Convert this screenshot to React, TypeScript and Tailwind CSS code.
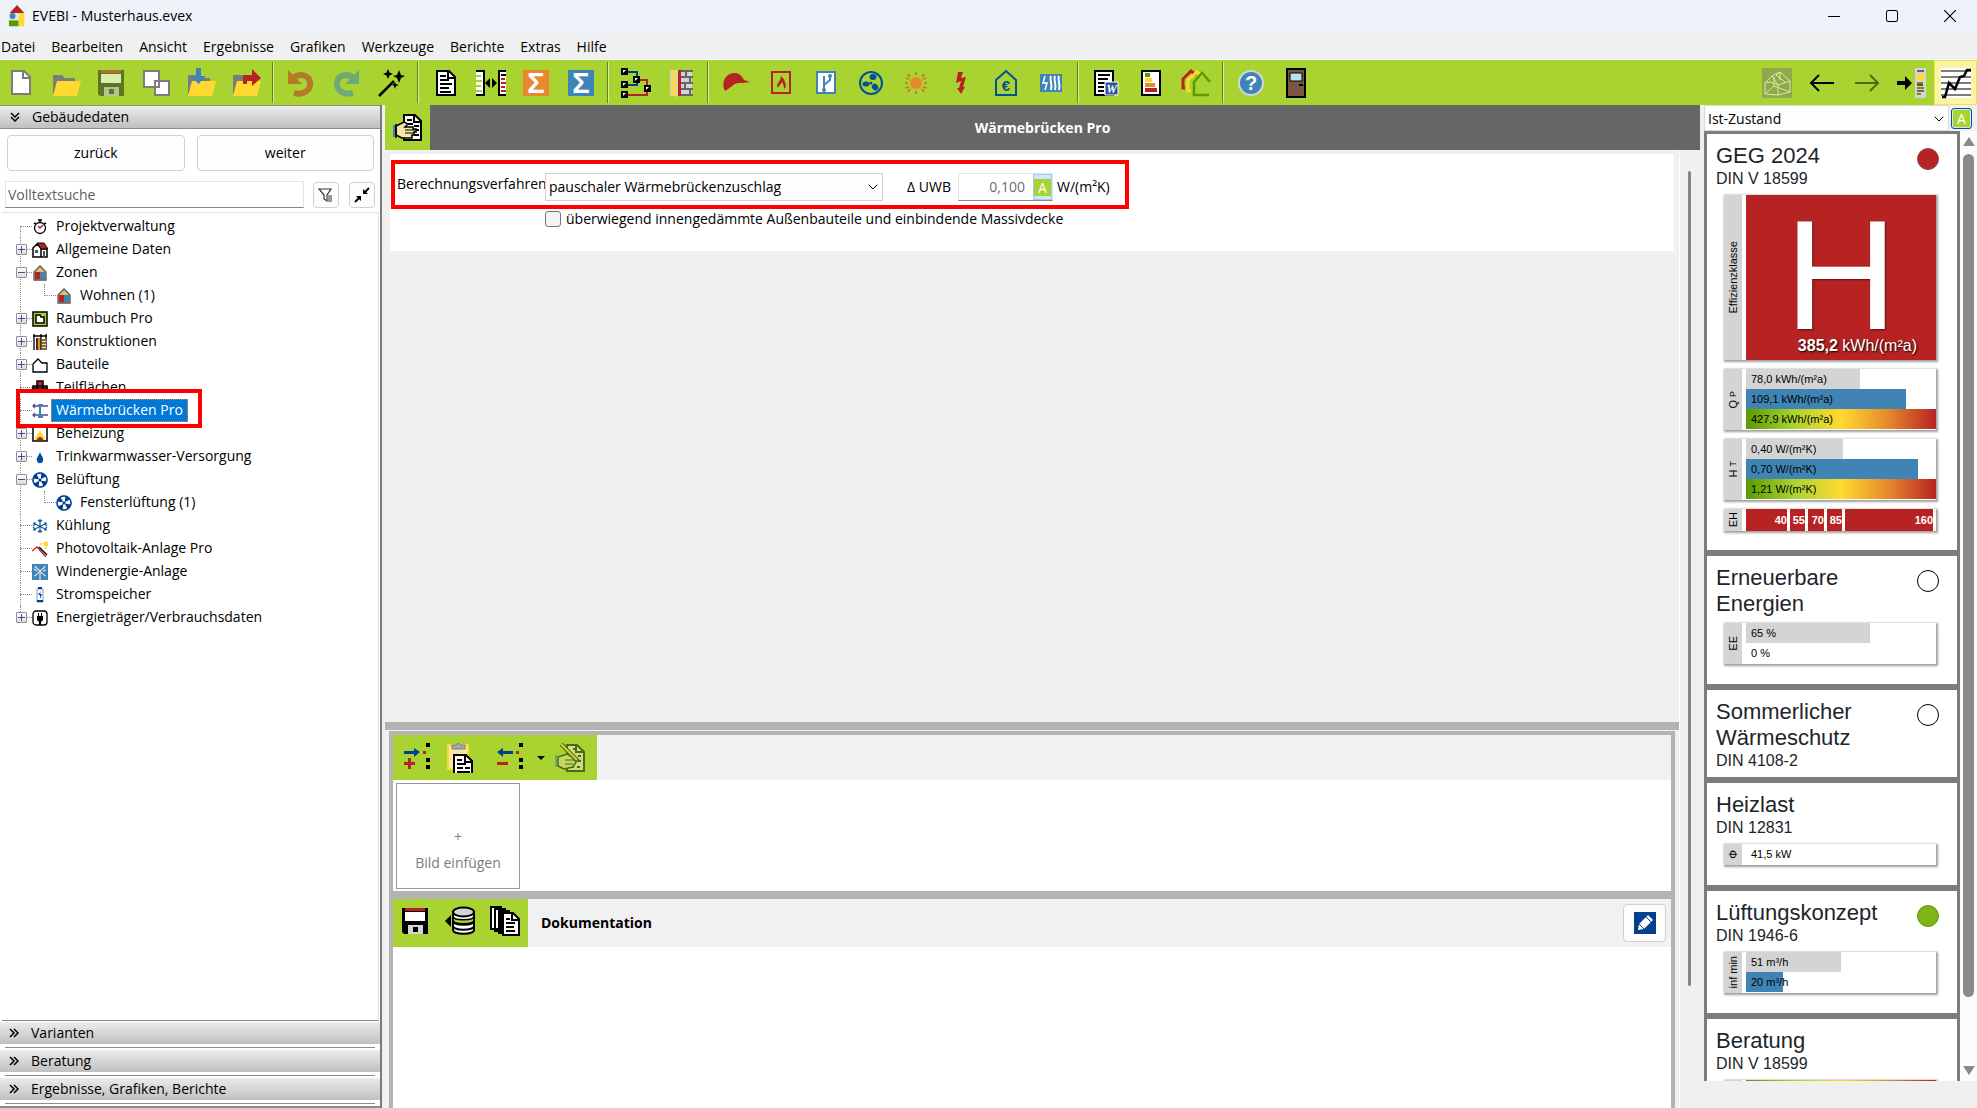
import type { ReactNode } from "react";
import { ChevronDown } from "lucide-react";

const Svg = ({ children, size = "w-[30px] h-[30px]" }: { children: ReactNode; size?: string }) => (
  <svg viewBox="0 0 30 30" className={`${size} shrink-0 overflow-visible`} fill="none" aria-hidden="true">
    {children}
  </svg>
);

const Folder = () => (
  <>
    <path d="M2 7h9l3 3h10v16H2z" fill="#7c7c7c" />
    <path d="M6 13h24l-4 15H2z" fill="#ffd92f" />
  </>
);

const Sheet = () => (
  <>
    <path d="M6 3h12l6 6v18H6z" fill="#fff" stroke="#000" strokeWidth="2" />
    <path d="M17 3v7h7" stroke="#000" strokeWidth="2" />
    <path d="M9 8h6M9 12h9M9 16h12M9 20h9M9 24h11" stroke="#000" strokeWidth="2" />
  </>
);

const NewFile = () => (
  <Svg>
    <path d="M6 3h12l6 6v17H6z" fill="#fff" stroke="#7c7c7c" strokeWidth="2" />
    <path d="M17 3v7h7" stroke="#7c7c7c" strokeWidth="2" />
  </Svg>
);

const OpenFile = () => (
  <Svg><Folder /></Svg>
);

const Save = () => (
  <Svg>
    <path d="M2 2h26v26H4l-2-2z" fill="#5d7424" />
    <path d="M5 2h20v3H5z" fill="#b5752a" />
    <path d="M5 6h20v9H5z" fill="#d8efb0" />
    <path d="M8 19h15v9H8z" fill="#b5c291" />
    <path d="M13 21h5v5h-5z" fill="#5d7424" />
  </Svg>
);

const Copy = () => (
  <Svg>
    <path d="M3 3h15v16H3zM14 13h14v14H14z" fill="#fff" stroke="#7c7c7c" strokeWidth="2" />
    <path d="M3 3h15v9" stroke="#7c7c7c" strokeWidth="2" />
  </Svg>
);

const ImportFile = () => (
  <Svg>
    <Folder />
    <path d="M10 0h5v8h5l-7.500 8L5 8h5z" fill="#3f84b5" />
  </Svg>
);

const ExportFile = () => (
  <Svg>
    <Folder />
    <path d="M12 16V7h9V1l9 9-9 8v-5h-5v3z" fill="#b72222" />
  </Svg>
);

const Undo = () => (
  <Svg>
    <path d="M8 9c9-5 17 0 16 8-1 7-8 10-16 8" stroke="#b5792a" strokeWidth="6" />
    <path d="M2 2v14h14z" fill="#b5792a" />
  </Svg>
);

const Redo = () => (
  <Svg>
    <path d="M22 9C13 4 5 9 6 17c1 7 8 10 16 8" stroke="#6fa978" strokeWidth="6" />
    <path d="M28 2v14H14z" fill="#6fa978" />
  </Svg>
);

const Wand = () => (
  <Svg>
    <path d="M3 28L18 13" stroke="#000" strokeWidth="2.500" />
    <path d="M12 1l1.500 3.500L17 6l-3.500 1.500L12 11l-1.500-3.500L7 6l3.500-1.500zM23 2l2 5 4 1-4 2-2 5-2-5-4-2 4-1zM19 14l1 2 3 1-3 1-1 3-1-3-2-1 2-1z" fill="#000" />
  </Svg>
);

const Report = () => (
  <Svg><Sheet /></Svg>
);

const Compare = () => (
  <Svg>
    <path d="M0 3h9v24H0z" fill="#fff" />
    <path d="M0 3h8v24H0" stroke="#000" strokeWidth="2" />
    <path d="M0 8h5M0 13h6M0 18h5M0 23h6" stroke="#a9d331" strokeWidth="2" />
    <path d="M22 3h8v24h-8z" fill="#fff" />
    <path d="M30 3h-7v24h7" stroke="#000" strokeWidth="2" />
    <path d="M25 7h5" stroke="#000" strokeWidth="2" />
    <path d="M25 11h4M25 15h5M25 19h4M25 23h5" stroke="#b72222" strokeWidth="2" />
    <path d="M14 10v10l-5-5zM16 10v10l5-5z" fill="#000" />
  </Svg>
);

const Sum = ({ color }: { color: string }) => (
  <Svg>
    <path d="M2 2h26v26H2z" fill={color} />
    <text x="15" y="25" textAnchor="middle" fontSize="29" fontWeight="bold" fontFamily="Liberation Sans, sans-serif" fill="#fff">Σ</text>
  </Svg>
);

const Scheme = () => (
  <Svg>
    <path d="M4 4h12v8M4 17h12v-5" stroke="#023f8e" strokeWidth="2" />
    <path d="M17 12h9v8M4 27h22v-7" stroke="#b72222" strokeWidth="2" />
    {[[0, 0], [0, 13], [0, 23], [12, 8], [23, 17]].map(([x, y]) => (
      <g key={`${x}-${y}`}>
        <rect x={x} y={y} width="7" height="7" fill="#000" />
        <path d={`M${x + 2} ${y + 5}v-3h3z`} fill="#fff" />
      </g>
    ))}
  </Svg>
);

const Wall = () => (
  <Svg>
    <path d="M4 2h9v26H4z" fill="#d4d4d4" />
    <path d="M5 3l6 2-6 3 6 3-6 3 6 3-6 3 6 3-6 3 6 2" stroke="#ffd92f" strokeWidth="2" />
    <path d="M12 2h3v26h-3z" fill="#b72222" />
    <path d="M15 2h11v26H15z" fill="#d4d4d4" />
    <path d="M15 3h12M15 9h12M15 15h12M15 21h12M15 27h12M20 3v6M24 9v6M19 15v6M24 21v6" stroke="#666" strokeWidth="2" />
  </Svg>
);

const Cap = () => (
  <Svg>
    <path d="M3 21C0 10 8 4 15 5c5 1 7 5 8 7l6 2-7 1c-6 0-8 0-12 4l-6 4z" fill="#b72222" />
  </Svg>
);

const Heating = () => (
  <Svg>
    <path d="M6 4h18v21H6z" stroke="#b72222" strokeWidth="2" />
    <path d="M12 20c-3-5 3-6 3-12 4 3 4 7 5 9 0 2-1 3-2 4 0-4-1-5-2-7-1 3-3 3-4 6z" fill="#b72222" />
  </Svg>
);

const Pipe = () => (
  <Svg>
    <path d="M6 4h18v21H6z" fill="#fff" stroke="#3f84b5" strokeWidth="2" />
    <path d="M13 8v14M13 17l6-5V8" stroke="#3f84b5" strokeWidth="2" />
    <circle cx="13" cy="22" r="2" fill="#3f84b5" />
    <circle cx="19" cy="8" r="2" fill="#3f84b5" />
  </Svg>
);

const Ventilation = () => (
  <Svg>
    <circle cx="15" cy="15" r="11" stroke="#01509a" strokeWidth="2" />
    <circle cx="15" cy="15" r="1.500" fill="#01509a" />
    <ellipse cx="17" cy="9" rx="3.500" ry="3" fill="#01509a" />
    <ellipse cx="10" cy="16" rx="3.500" ry="2.500" fill="#01509a" />
    <ellipse cx="19" cy="19" rx="3" ry="3.500" fill="#01509a" transform="rotate(-35 19 19)" />
  </Svg>
);

const Sun = () => (
  <Svg>
    <circle cx="15" cy="15" r="6" fill="#e8892f" />
    <path d="M15 4v3M15 23v3M4 15h3M23 15h3M7 6l2 3M23 6l-2 3M7 24l2-3M23 24l-2-3M5 10l3 1M25 10l-3 1M5 20l3-1M25 20l-3-1" stroke="#d8662a" strokeWidth="1.500" />
  </Svg>
);

const Bolt = () => (
  <Svg>
    <path d="M12 4h5l-2 6 5-1-3 10h2l-4 7-4-6h2l2-7-5 2z" fill="#b72222" />
  </Svg>
);

const Cost = () => (
  <Svg>
    <path d="M5 12L15 3l10 9v15H5z" stroke="#01509a" strokeWidth="2" />
    <text x="15" y="23" textAnchor="middle" fontSize="15" fontWeight="bold" fontFamily="Liberation Sans, sans-serif" fill="#01509a">€</text>
  </Svg>
);

const Electric = () => (
  <Svg>
    <path d="M4 6h22v18H4z" fill="#3f84b5" />
    <path d="M9 8l-2 7h4l-2 7" stroke="#fff" strokeWidth="1.500" />
    <path d="M15 8c-2 4 2 8 0 14M19 8c-2 4 2 8 0 14M23 8c-2 4 2 8 0 14" stroke="#fff" strokeWidth="2" />
  </Svg>
);

const WordReport = () => (
  <Svg>
    <path d="M4 3h18v24H4z" fill="#fff" stroke="#000" strokeWidth="2" />
    <path d="M7 7h12M7 11h10M7 15h12M7 19h6M7 23h6" stroke="#000" strokeWidth="2" />
    <path d="M14 14h13v13H14z" fill="#2a5699" stroke="#fff" />
    <text x="20.500" y="25" textAnchor="middle" fontSize="12" fontStyle="italic" fontWeight="bold" fontFamily="Liberation Serif, serif" fill="#fff">W</text>
  </Svg>
);

const EnergyPass = () => (
  <Svg>
    <path d="M6 3h18v24H6z" fill="#fff" stroke="#000" strokeWidth="2" />
    <path d="M9 5h5v4H9z" fill="#5b9a00" />
    <path d="M9 10h7v4H9z" fill="#ffd92f" />
    <path d="M9 15h10v4H9z" fill="#e8892f" />
    <path d="M9 20h12v4H9z" fill="#b72222" />
  </Svg>
);

const Houses = () => (
  <Svg>
    <path d="M4 20h-2V11l8-8 5 4" stroke="#b72222" strokeWidth="3" />
    <path d="M10 23H7V12l9-8 5 4" stroke="#ffd92f" strokeWidth="3" />
    <path d="M28 27H13V14l8-9 8 9" stroke="#5b9a00" strokeWidth="2.500" />
  </Svg>
);

const Help = () => (
  <Svg>
    <circle cx="15" cy="15" r="12" fill="#3f84b5" stroke="#cfd8dc" strokeWidth="2" />
    <text x="15" y="22" textAnchor="middle" fontSize="20" fontWeight="bold" fontFamily="Liberation Sans, sans-serif" fill="#fff">?</text>
  </Svg>
);

const Door = () => (
  <Svg>
    <path d="M6 1h18v28H6z" fill="#7b5541" stroke="#000" strokeWidth="2" />
    <path d="M9 5h12v8H9z" fill="#b9dcf5" stroke="#000" />
    <path d="M18 17h4" stroke="#000" strokeWidth="2" />
  </Svg>
);

const HouseModel = () => (
  <Svg>
    <path d="M0 0h30v30H0z" fill="#8fa84d" />
    <path d="M3 15l7-7 8-4 10 9v11l-12 3-13-1zM3 15l5-1 8 3 12-4M16 17v10M10 8l6 9M18 4l-4 3 9 7M12 9v9l-9 8M12 18l16 6M18 4v8" stroke="#d9ec9f" />
  </Svg>
);

const ArrowBack = () => (
  <Svg>
    <path d="M27 15H4M12 7l-8 8 8 8" stroke="#000" strokeWidth="2" />
  </Svg>
);

const ArrowForward = () => (
  <Svg>
    <path d="M3 15h23M18 7l8 8-8 8" stroke="#4f6a12" strokeWidth="2" />
  </Svg>
);

const JumpTo = () => (
  <Svg>
    <path d="M0 13h8V8l7 7-7 7v-5H0z" fill="#000" />
    <path d="M18 0h11v30H18z" fill="#d4d4d4" />
    <path d="M20 2h7v2h-7z" fill="#666" />
    <path d="M20 6h7v6h-7z" fill="#ffd92f" />
    <path d="M20 15h6M20 20h7M20 26h4" stroke="#5b9a00" strokeWidth="2" />
    <path d="M20 17h6" stroke="#b72222" strokeWidth="2" />
    <path d="M20 23h7" stroke="#666" strokeWidth="2" />
  </Svg>
);

const Chart = () => (
  <Svg>
    <path d="M0 0h30v30H0z" fill="#fff" />
    <path d="M0 3h30M0 9h30M0 15h30M0 21h30M0 27h30" stroke="#7c7c7c" strokeWidth="2" />
    <path d="M1 29h3l4-14 6 6 5-12 4-1 3-6h4" stroke="#000" strokeWidth="2.500" />
  </Svg>
);

const HandSheet = () => (
  <Svg>
    <path d="M11 2h11l6 6v19H11z" fill="#fff" stroke="#000" strokeWidth="2" />
    <path d="M21 2v7h6M14 7h5M14 11h6M21 13h5M21 17h5M21 22h5" stroke="#000" strokeWidth="2" />
    <path d="M3 13l8-4 4 2-3 3h8v2h3v3h-2v3h-2v3H9l-6-3z" fill="#f5e6a8" stroke="#000" strokeWidth="1.500" />
    <path d="M12 17h10M12 20h9" stroke="#000" />
    <path d="M0 12h2v12H0z" fill="#3f84b5" />
    <path d="M3 11v14" stroke="#000" strokeWidth="1.500" />
  </Svg>
);

const DotsColumn = () => <path d="M22 0h4v4h-4zM22 15h4v4h-4zM22 22h4v4h-4z" fill="#000" />;

const AddItem = () => (
  <Svg>
    <DotsColumn />
    <path d="M0 8h10V5l6 4-6 5v-3H0z" fill="#023f8e" />
    <path d="M19 8h3v3h-3zM0 19h4v-4h3v4h4v3H7v4H4v-4H0z" fill="#b72222" />
  </Svg>
);

const RemoveItem = () => (
  <Svg>
    <DotsColumn />
    <path d="M16 8H6V5L0 9l6 5v-3h10z" fill="#023f8e" />
    <path d="M19 8h3v3h-3zM0 19h11v3H0z" fill="#b72222" />
  </Svg>
);

const Paste = () => (
  <Svg>
    <path d="M2 2h20v24H2z" fill="#f5e6a8" stroke="#ffd92f" strokeWidth="2" />
    <path d="M6 2h4l2-2 3 2h4v4H6z" fill="#a8a8a8" stroke="#7c7c7c" />
    <path d="M8 30V12h12l6 6v12" fill="#fff" stroke="#000" strokeWidth="2" />
    <path d="M19 12v7h6M11 17h5M11 21h9M11 25h6M19 25h5M11 29h13" stroke="#000" strokeWidth="2" />
  </Svg>
);

const HandPencil = () => (
  <Svg>
    <path d="M12 2h10l7 7v19H12z" fill="#c8df84" stroke="#4f6a12" strokeWidth="2" />
    <path d="M21 2v7h7" stroke="#4f6a12" strokeWidth="2" />
    <path d="M18 6h2M23 13h3M23 18h3M16 24h3M22 24h3" stroke="#4f6a12" strokeWidth="2" />
    <path d="M3 14l9-3 6 4 3 4-3 5-9 2-6-3z" fill="#c2d860" stroke="#4f6a12" strokeWidth="1.500" />
    <path d="M10 17h9M10 21h8" stroke="#4f6a12" />
    <path d="M0 12h2v12H0z" fill="#6fa978" />
    <path d="M6 1l17 17" stroke="#4f6a12" strokeWidth="4" />
    <path d="M6 1l16 16" stroke="#d6d43a" strokeWidth="2" />
  </Svg>
);

const Floppy = () => (
  <Svg>
    <path d="M2 2h26v26H4l-2-2z" fill="#000" />
    <path d="M5 2h20v3H5z" fill="#b72222" />
    <path d="M5 6h20v9H5z" fill="#fff" />
    <path d="M8 19h15v9H8z" fill="#d4d4d4" />
    <path d="M13 21h5v5h-5z" fill="#000" />
  </Svg>
);

const Database = () => (
  <Svg>
    <path d="M0 15l6-6v12z" fill="#000" />
    <path d="M8 6v18c0 5 21 5 21 0V6z" fill="#fff" stroke="#000" strokeWidth="2" />
    <path d="M8 10c0 5 21 5 21 0v4c0 5-21 5-21 0z" fill="#a9d331" stroke="#000" strokeWidth="1.500" />
    <path d="M8 15c0 5 21 5 21 0M8 20c0 5 21 5 21 0" stroke="#000" strokeWidth="2" />
    <ellipse cx="18.500" cy="6" rx="10.500" ry="4.500" fill="#d4d4d4" stroke="#000" strokeWidth="2" />
  </Svg>
);

const Sheets = () => (
  <Svg>
    <path d="M1 1h10v22H1zM5 3h10v22H5zM9 5h10v22H9z" fill="#fff" stroke="#000" strokeWidth="2" />
    <path d="M13 7h10l6 6v16H13z" fill="#fff" stroke="#000" strokeWidth="2" />
    <path d="M22 7v7h6M16 13h4M16 17h9M16 21h8M16 25h9" stroke="#000" strokeWidth="2" />
  </Svg>
);

const Logo = () => (
  <Svg size="w-[22px] h-[26px]">
    <path d="M5 11L15 0l10 11z" fill="#b72222" />
    <path d="M4 11h13v10H4z" fill="#dbe9f5" />
    <path d="M17 11h8v18h-8z" fill="#ffd92f" />
    <circle cx="9" cy="15" r="4" fill="#3f84b5" />
    <path d="M4 21h13v8H4z" fill="#5b9a00" />
  </Svg>
);

const treeIcons: Record<string, ReactNode> = {
  clock: (
    <>
      <circle cx="8" cy="9" r="5.500" stroke="#000" strokeWidth="1.300" fill="#fff" />
      <path d="M6 1h4M8 1v3M2 4l2 1M14 4l-2 1" stroke="#000" strokeWidth="1.500" />
      <path d="M6 7l2 2 3-3" stroke="#b72222" strokeWidth="1.500" />
    </>
  ),
  house: (
    <>
      <path d="M1 15V6l4-4 4 4v9zM9 15V7h6v8z" fill="#fff" stroke="#000" strokeWidth="1.500" />
      <path d="M5 1h7l4 6H9z" fill="#b72222" stroke="#000" />
      <path d="M3 8h3v3H3zM11 9h2v6h-2z" fill="#555" />
    </>
  ),
  zone: (
    <>
      <path d="M8 1L2 7v8h12V7z" fill="#dcc07c" stroke="#555" strokeWidth="1.300" />
      <path d="M3 7h5v7H3z" fill="#b72222" />
      <path d="M8 7h5v7H8z" fill="#3f84b5" />
    </>
  ),
  book: (
    <>
      <path d="M1 1h14v14H1z" fill="#a9d331" stroke="#000" strokeWidth="1.500" />
      <path d="M4 4h4l1 2h3v6H4z" fill="#fff" stroke="#000" strokeWidth="1.500" />
    </>
  ),
  layers: (
    <>
      <path d="M4 4h5v12H4z" fill="#e8892f" />
      <path d="M1 2h14M2 0v16M5 4v12M9 0v16M14 0v16" stroke="#000" strokeWidth="1.300" />
      <path d="M10 5h4v11h-4z" fill="#f7e39a" />
      <path d="M10 6h4M10 9h4M10 12h4M10 15h4" stroke="#000" />
    </>
  ),
  outline: <path d="M1 15V7l5-5 4 4h5v9z" stroke="#000" strokeWidth="1.300" />,
  parts: (
    <>
      <path d="M5 1h6v6H5z" fill="#b72222" stroke="#000" strokeWidth="1.500" />
      <path d="M1 6h14v6H1z" fill="#aaa" stroke="#000" strokeWidth="1.500" />
      <path d="M5 6v9M11 6v9M0 8h16" stroke="#000" strokeWidth="1.500" />
      <path d="M5 12h6v3H5z" fill="#b72222" />
    </>
  ),
  bridge: (
    <>
      <path d="M1 3h15M1 12h15M3 1L1 3l2 2M3 10l-2 2 2 2" stroke="#5a4a8a" strokeWidth="1.300" />
      <path d="M8 2v12" stroke="#01509a" strokeWidth="1.500" />
      <path d="M6 1h5v3H6zM6 11h5v4H6z" fill="#3f84b5" />
    </>
  ),
  flame: (
    <>
      <path d="M1 1h14v14H1z" fill="#fff" stroke="#000" strokeWidth="1.500" />
      <path d="M3 14c0-5 4-5 5-11 1 6 5 6 5 11z" fill="#ffd92f" />
      <path d="M5 14c0-4 6-4 6 0z" fill="#b72222" />
    </>
  ),
  drop: <path d="M8 3c1 4 4 5 3 9-1 3-5 3-6 0-1-4 2-5 3-9z" fill="#01509a" />,
  fan: (
    <>
      <circle cx="8" cy="8" r="7.500" fill="#023f8e" />
      <path d="M8 8L5 2l4-1zM8 8l6-3 1 4zM8 8l3 6-4 1zM8 8l-6 3-1-4z" fill="#fff" stroke="#fff" strokeLinejoin="round" />
      <circle cx="8" cy="8" r="7" stroke="#023f8e" strokeWidth="1.500" />
      <circle cx="8" cy="8" r="1.500" fill="#023f8e" />
    </>
  ),
  snow: (
    <path d="M8 1v14M1 5l14 7M15 5L1 12M6 2l2 2 2-2M6 14l2-2 2 2M1 8l2-2V4M15 8l-2-2V4M1 9l2 2v2M15 9l-2 2v2" stroke="#1d5a9c" strokeWidth="1.200" />
  ),
  solar: (
    <>
      <path d="M0 10l5-4 9 10" stroke="#b72222" strokeWidth="1.300" />
      <path d="M7 6l8 8" stroke="#000" strokeWidth="1.500" />
      <path d="M11 1h5v4h-4zM8 2h2v2H8zM13 6h2v2h-2z" fill="#ffd92f" />
    </>
  ),
  wind: (
    <>
      <path d="M0 0h16v16H0z" fill="#3f84b5" />
      <path d="M8 9v7M8 8C7 4 4 5 3 2M8 8c1-4 4-2 5-6M8 8c-3 0-3 4-6 4M8 8c3 0 3 4 6 4M2 5l3 2M11 7l3-1" stroke="#dcebf6" strokeWidth="1.200" />
    </>
  ),
  battery: (
    <>
      <path d="M5 2h6v13H5z" fill="#fff" stroke="#7d9cc0" />
      <path d="M6 0h4v2H6zM5 13h6v2H5z" fill="#023f8e" />
      <path d="M9 4L6 8h2v4l2-5H8z" fill="#023f8e" />
    </>
  ),
  plug: (
    <>
      <rect x="1" y="1" width="14" height="14" rx="3" stroke="#000" strokeWidth="1.300" />
      <path d="M6 3h1v3h2V3h1v3h1v4l-2 2v3H7v-3l-2-2V6h1z" fill="#000" />
    </>
  ),
};

type Node = { label: string; icon: string; mark?: "+" | "-"; child?: boolean; selected?: boolean };

const nodes: Node[] = [
  { label: "Projektverwaltung", icon: "clock" },
  { label: "Allgemeine Daten", icon: "house", mark: "+" },
  { label: "Zonen", icon: "zone", mark: "-" },
  { label: "Wohnen (1)", icon: "zone", child: true },
  { label: "Raumbuch Pro", icon: "book", mark: "+" },
  { label: "Konstruktionen", icon: "layers", mark: "+" },
  { label: "Bauteile", icon: "outline", mark: "+" },
  { label: "Teilflächen", icon: "parts" },
  { label: "Wärmebrücken Pro", icon: "bridge", selected: true },
  { label: "Beheizung", icon: "flame", mark: "+" },
  { label: "Trinkwarmwasser-Versorgung", icon: "drop", mark: "+" },
  { label: "Belüftung", icon: "fan", mark: "-" },
  { label: "Fensterlüftung (1)", icon: "fan", child: true },
  { label: "Kühlung", icon: "snow" },
  { label: "Photovoltaik-Anlage Pro", icon: "solar" },
  { label: "Windenergie-Anlage", icon: "wind" },
  { label: "Stromspeicher", icon: "battery" },
  { label: "Energieträger/Verbrauchsdaten", icon: "plug", mark: "+" },
];

const TreeRow = ({ node, first, last }: { node: Node; first: boolean; last: boolean }) => (
  <li className={`relative flex items-center h-[23px] pl-3.5 ${node.selected ? "z-10" : ""}`}>
    {/* highlight frame around the active entry */}
    {node.selected && <div className="absolute left-3.5 -top-2.5 w-[186px] h-[39px] border-4 border-[#ff0000] bg-white" />}
    <span
      className={`absolute left-[18px] border-l border-dotted border-[#8c8c8c] ${first ? "top-3" : "top-0"} ${last ? "h-3" : "bottom-0"}`}
    />
    <span className="relative flex items-center w-4 h-full shrink-0">
      {node.mark ? (
        <button
          aria-label={node.mark === "+" ? "Aufklappen" : "Zuklappen"}
          className="relative w-[11px] h-[11px] shrink-0 border border-[#919191] rounded-[1px] bg-linear-to-b from-white to-[#dcdcdc]"
        >
          <span className="absolute left-[1px] top-1 w-[7px] h-px bg-[#3a4f9f]" />
          {node.mark === "+" && <span className="absolute left-1 top-[1px] w-px h-[7px] bg-[#3a4f9f]" />}
        </button>
      ) : (
        <span className="w-1 shrink-0" />
      )}
      {!node.child && <span className="grow border-t border-dotted border-[#8c8c8c]" />}
    </span>
    {node.child && (
      <span className="flex w-6 h-full shrink-0 pl-3">
        <span className="w-3 h-3 border-l border-b border-dotted border-[#8c8c8c]" />
      </span>
    )}
    <svg viewBox="0 0 16 16" fill="none" className="relative w-4 h-4 shrink-0" aria-hidden="true">
      {treeIcons[node.icon]}
    </svg>
    <span
      className={`relative ml-[3px] px-[5px] h-[23px] leading-[22px] whitespace-nowrap ${
        node.selected ? "bg-[#0078d7] text-white outline-1 -outline-offset-1 outline-dotted outline-[#ff8728]" : ""
      }`}
    >
      {node.label}
    </span>
  </li>
);

const toolGroups: { name: string; icon: ReactNode }[][] = [
  [
    { name: "Neu", icon: <NewFile /> },
    { name: "Öffnen", icon: <OpenFile /> },
    { name: "Speichern", icon: <Save /> },
    { name: "Kopieren", icon: <Copy /> },
    { name: "Importieren", icon: <ImportFile /> },
    { name: "Exportieren", icon: <ExportFile /> },
  ],
  [
    { name: "Rückgängig", icon: <Undo /> },
    { name: "Wiederholen", icon: <Redo /> },
    { name: "Assistent", icon: <Wand /> },
  ],
  [
    { name: "Bericht", icon: <Report /> },
    { name: "Vergleich", icon: <Compare /> },
    { name: "Summe", icon: <Sum color="#e8892f" /> },
    { name: "Gesamtsumme", icon: <Sum color="#3f84b5" /> },
  ],
  [
    { name: "Schema", icon: <Scheme /> },
    { name: "Wand", icon: <Wall /> },
  ],
  [
    { name: "Berater", icon: <Cap /> },
    { name: "Heizung", icon: <Heating /> },
    { name: "Leitungen", icon: <Pipe /> },
    { name: "Lüftung", icon: <Ventilation /> },
    { name: "Solar", icon: <Sun /> },
    { name: "Strom", icon: <Bolt /> },
    { name: "Kosten", icon: <Cost /> },
    { name: "Elektroheizung", icon: <Electric /> },
  ],
  [
    { name: "Word-Bericht", icon: <WordReport /> },
    { name: "Energieausweis", icon: <EnergyPass /> },
    { name: "Sanierungsfahrplan", icon: <Houses /> },
  ],
  [
    { name: "Hilfe öffnen", icon: <Help /> },
    { name: "Beenden", icon: <Door /> },
  ],
];

const ToolButton = ({ name, children }: { name: string; children: ReactNode }) => (
  <button aria-label={name} className="flex items-center justify-center w-[45px] h-[45px] shrink-0">
    {children}
  </button>
);

const Toolbar = () => (
  <div className="flex justify-between h-[45px] shrink-0 bg-[#a9d331]">
    <div className="flex -ml-0.5">
      {toolGroups.map((group, i) => (
        <div key={i} className="flex">
          {i > 0 && <div className="w-0.5 h-[41px] mt-0.5 ml-1 mr-1 border-l border-[#64801a] bg-[#d9ec9f]" />}
          {group.map((tool) => (
            <ToolButton key={tool.name} name={tool.name}>{tool.icon}</ToolButton>
          ))}
        </div>
      ))}
    </div>
    <div className="flex">
      <ToolButton name="Hausmodell"><HouseModel /></ToolButton>
      <ToolButton name="Zurück"><ArrowBack /></ToolButton>
      <ToolButton name="Vorwärts"><ArrowForward /></ToolButton>
      <ToolButton name="Springen"><JumpTo /></ToolButton>
      <button aria-label="Kennwerte" className="flex items-center justify-center w-[43px] h-[45px] bg-[#fbf3a8] border border-[#f0e24a]">
        <Chart />
      </button>
    </div>
  </div>
);

const DoubleChevron = ({ down }: { down?: boolean }) => (
  <svg viewBox="0 0 10 10" className={`w-2.5 h-2.5 shrink-0 ${down ? "rotate-90" : ""}`} fill="none" stroke="#000" strokeWidth="1.500" aria-hidden="true">
    <path d="M1 1l4 4-4 4M5 1l4 4-4 4" />
  </svg>
);

const Sidebar = () => (
  <aside className="flex flex-col w-[382px] shrink-0 bg-white border-r-2 border-[#7a7a7a]">
    <button className="flex items-center gap-3 h-6 pl-2.5 shrink-0 border-t border-b border-[#8c8c8c] bg-linear-to-b from-[#ececec] to-[#c0c0c0]">
      <DoubleChevron down />
      Gebäudedaten
    </button>
    <div className="flex gap-3 pl-[7px] pr-[6px] pt-1.5">
      <button className="flex-1 h-9 border border-[#d0d0d0] rounded-sm bg-[#fdfdfd]">zurück</button>
      <button className="flex-1 h-9 border border-[#d0d0d0] rounded-sm bg-[#fdfdfd]">weiter</button>
    </div>
    <div className="flex items-center pl-[5px] pr-[5px] pt-2.5 pb-1">
      <input
        aria-label="Volltextsuche"
        placeholder="Volltextsuche"
        className="grow min-w-0 h-[27px] pl-0.5 border border-[#e5e5e5] border-b-[#868686] placeholder-[#5f5f5f] outline-none"
      />
      <button aria-label="Filter" className="flex items-center justify-center w-[26px] h-[26px] ml-[9px] border border-[#d0d0d0] rounded-sm bg-[#fdfdfd]">
        <svg viewBox="0 0 16 16" className="w-4 h-4" fill="none" aria-hidden="true">
          <path d="M1 2h12L9 8v6L6 12V8z" stroke="#333" strokeWidth="1.200" />
          <path d="M10 8h4v7h-4z" fill="#999" />
        </svg>
      </button>
      <button aria-label="Baum einklappen" className="flex items-center justify-center w-[26px] h-[26px] ml-2.5 border border-[#d0d0d0] rounded-sm bg-[#fdfdfd]">
        <svg viewBox="0 0 16 16" className="w-4 h-4" aria-hidden="true">
          <path d="M15 1l-4 4" stroke="#000" strokeWidth="2" />
          <path d="M9 2v5h5zM7 14V9H2z" fill="#000" />
          <path d="M1 15l4-4" stroke="#000" strokeWidth="2" />
        </svg>
      </button>
    </div>
    <ul className="grow min-h-0 ml-0.5 mr-px pt-0.5 border-t border-r border-b border-[#e3e3e3] border-b-[#868686]">
      {nodes.map((node, i) => (
        <TreeRow key={node.label} node={node} first={i === 0} last={i === nodes.length - 1} />
      ))}
    </ul>
    <div className="pt-px border-b-2 border-[#8c8c8c]">
      {["Varianten", "Beratung", "Ergebnisse, Grafiken, Berichte"].map((title) => (
        <div key={title}>
          <button className="flex items-center gap-3 w-full h-[22px] pl-[9px] bg-linear-to-b from-[#ececec] to-[#c0c0c0]">
            <DoubleChevron />
            {title}
          </button>
          <div className="h-px mx-[5px] mt-[3px] mb-0.5 bg-[#8c8c8c]" />
        </div>
      ))}
    </div>
  </aside>
);

const Workspace = () => (
  <main className="flex flex-col grow min-w-0 pl-[3px]">
    <div className="flex h-[45px] mr-1 shrink-0 bg-[#666666]">
      <div className="flex items-center justify-center w-[45px] bg-[#a9d331]">
        <HandSheet />
      </div>
      <h1 className="grow pr-[45px] self-center text-center font-bold text-white">Wärmebrücken Pro</h1>
    </div>
    <div className="flex grow min-h-0">
      <div className="flex flex-col grow min-w-0 border-r border-white">
        <section className="mt-1 ml-[5px] mr-[5px] h-[97px] shrink-0 bg-white">
          <div className="pt-1.5 pl-px">
            <div className="flex items-center w-[738px] h-[49px] pl-0.5 pt-[5px] border-4 border-[#ff0000]">
              <label htmlFor="verfahren" className="w-[148px] pb-1.5 whitespace-nowrap">Berechnungsverfahren</label>
              <div className="relative w-[338px]">
                <select id="verfahren" className="appearance-none w-full h-7 pl-[3px] border border-[#cfcfcf] bg-[#fdfdfd]">
                  <option>pauschaler Wärmebrückenzuschlag</option>
                </select>
                <ChevronDown className="absolute right-0.5 top-1.5 w-4 h-4 pointer-events-none" strokeWidth={1.5} />
              </div>
              <label htmlFor="uwb" className="ml-6 w-[51px]">Δ UWB</label>
              <div className="flex w-[95px] h-7 border border-[#e5e5e5] border-b-[#868686]">
                <input id="uwb" defaultValue="0,100" className="grow min-w-0 pr-2 text-right text-[#6d6d6d] outline-none" />
                <button className="flex items-center justify-center w-6 border border-[#99cef5] bg-[#cce8ff]">
                  <span className="w-[17px] h-[17px] bg-[#a9d331] text-white leading-[17px]">A</span>
                </button>
              </div>
              <span className="ml-1">W/(m²K)</span>
            </div>
          </div>
          <label className="flex items-center gap-[5px] h-5 ml-[155px]">
            <input type="checkbox" className="appearance-none w-4 h-4 border border-[#767676] rounded-[3px] bg-[#f3f3f3]" />
            überwiegend innengedämmte Außenbauteile und einbindende Massivdecke
          </label>
        </section>
        <div className="grow" />
        <div className="h-2 mb-px shrink-0 bg-[#b3b3b3]" />
        <div className="flex flex-col h-[377px] shrink-0 ml-1 mr-1 border-4 border-b-0 border-[#b3b3b3] bg-white">
          <div className="flex h-[45px] shrink-0 bg-[#f1f1f1]">
            <div className="flex items-center w-[204px] bg-[#a9d331]">
              <button aria-label="Bild hinzufügen" className="pl-[11px]"><AddItem /></button>
              <button aria-label="Bild aus Zwischenablage" className="pl-3"><Paste /></button>
              <button aria-label="Bild entfernen" className="pl-[21px]"><RemoveItem /></button>
              <button aria-label="Weitere Optionen" className="pl-2.5">
                <svg viewBox="0 0 8 4" className="w-2 h-1" aria-hidden="true"><path d="M0 0h8L4 4z" fill="#000" /></svg>
              </button>
              <button aria-label="Bild bearbeiten" className="pl-2.5"><HandPencil /></button>
            </div>
          </div>
          <div className="h-[111px] shrink-0 pt-[3px] pl-[3px]">
            <button className="flex flex-col items-center justify-end w-[124px] h-[106px] pb-3 border border-[#9a9a9a] leading-[26px] text-[#7d7d7d]">
              <span>+</span>
              <span>Bild einfügen</span>
            </button>
          </div>
          <div className="h-2 shrink-0 bg-[#b3b3b3]" />
          <div className="flex items-center h-12 shrink-0 pr-[5px] bg-[#f1f1f1]">
            <div className="flex items-center gap-[15px] w-[135px] h-full pl-[7px] pb-1 bg-[#a9d331]">
              <button aria-label="Dokumentation speichern"><Floppy /></button>
              <button aria-label="Aus Datenbank"><Database /></button>
              <button aria-label="Vorlagen"><Sheets /></button>
            </div>
            <h2 className="grow pl-[13px] font-bold">Dokumentation</h2>
            <button aria-label="Dokumentation bearbeiten" className="flex items-center justify-center w-[43px] h-[38px] border border-[#d0d0d0] rounded-sm bg-[#fdfdfd]">
              <svg viewBox="0 0 22 22" className="w-[22px] h-[22px]" aria-hidden="true">
                <path d="M0 0h22v22H0z" fill="#023f8e" />
                <path d="M4 18l1-6 9-9 5 5-9 9z" fill="#fff" />
                <path d="M12 5l5 5M5 12l5 5" stroke="#023f8e" />
              </svg>
            </button>
          </div>
          <textarea aria-label="Dokumentation" className="grow w-full resize-none outline-none" />
        </div>
      </div>
      <div className="w-6 pl-2 pt-[21px]">
        <div className="w-[3px] h-[815px] rounded-full bg-[#868686]" />
      </div>
    </div>
  </main>
);

type Bar = { text?: string; width: string; kind: "grey" | "blue" | "scale" | "none" };

const barColors = {
  grey: "bg-[#d4d4d4]",
  blue: "bg-[#3f84b5]",
  scale: "bg-[linear-gradient(to_right,#5b9a00,#a9d331_25%,#ffd92f_50%,#e6892e_75%,#b72222)]",
  none: "",
};

const Frame = ({ label, children }: { label?: ReactNode; children: ReactNode }) => (
  <div className="flex gap-1 ml-[17px] mr-[21px] shadow-[1px_1px_2px_1px_#a0a0a0]">
    <div className="flex items-center justify-center w-[18px] shrink-0 bg-[#d4d4d4]">
      <span className="[writing-mode:vertical-rl] rotate-180 text-[11px] leading-[18px] whitespace-nowrap">{label}</span>
    </div>
    <div className="grow min-w-0">{children}</div>
  </div>
);

const Bars = ({ label, bars }: { label?: ReactNode; bars: Bar[] }) => (
  <Frame label={label}>
    <div className="pb-px text-[11px] leading-5">
      {bars.map((bar, i) => (
        <div key={i} className={`h-5 pl-[5px] whitespace-nowrap ${barColors[bar.kind]}`} style={{ width: bar.width }}>
          {bar.text}
        </div>
      ))}
    </div>
  </Frame>
);

const Card = ({ title, norm, dot, children }: { title: string; norm?: string; dot?: string; children?: ReactNode }) => (
  <section className="shrink-0 mb-[6px] pt-[9px] bg-white">
    <div className="flex justify-between pl-[9px] pr-[18px] pb-1.5">
      <div>
        <h2 className="w-[170px] text-[22px] leading-[26px] text-[#212529]">{title}</h2>
        {norm && <p className="text-base leading-5 text-[#212529]">{norm}</p>}
      </div>
      {dot && <span className={`w-[22px] h-[22px] mt-[5px] shrink-0 rounded-full border ${dot}`} />}
    </div>
    {children}
  </section>
);

const levels = [
  { text: "40", width: "w-[41px]" },
  { text: "55", width: "w-[15px]" },
  { text: "70", width: "w-4" },
  { text: "85", width: "w-[15px]" },
  { text: "160", width: "w-[88px]" },
];

const Results = () => (
  <aside className="flex flex-col w-[273px] shrink-0">
    <div className="flex items-end h-[26px] shrink-0">
      <div className="relative w-[245px]">
        <select aria-label="Zustand" className="appearance-none w-full h-[26px] pl-[3px] pt-0.5 border border-[#d9d9d9] bg-[#fdfdfd]">
          <option>Ist-Zustand</option>
        </select>
        <ChevronDown className="absolute right-0.5 top-1.5 w-4 h-4 pointer-events-none" strokeWidth={1.5} />
      </div>
      <button className="flex items-center justify-center w-[21px] h-[21px] ml-0.5 mb-0.5 border border-[#01509a] rounded-[3px] bg-[#cce8ff]">
        <span className="w-[17px] h-[17px] bg-[#a9d331] text-white leading-[17px]">A</span>
      </button>
    </div>
    <div className="flex grow min-h-0 mb-[27px]">
      <div className="flex flex-col w-64 p-[3px] pb-0 overflow-hidden bg-[#7c7c7c] font-['Liberation_Sans',sans-serif]">
        <Card title="GEG 2024" norm="DIN V 18599" dot="bg-[#b72222] border-[#8a4a4a]">
          <div className="flex flex-col gap-[9px] pb-[19px]">
            <Frame label="Effizienzklasse">
              <div className="flex flex-col items-center justify-end h-[165px] pb-1 bg-[#b72222] text-white">
                <div className="h-[122px] text-[156px] leading-[122px] [text-shadow:1px_1px_2px_#00000080]">H</div>
                <div className="self-end pr-[19px] text-base leading-5 [text-shadow:1px_1px_2px_#000000]">
                  <b>385,2</b> kWh/(m²a)
                </div>
              </div>
            </Frame>
            <Bars
              label={<>Q <small>P</small></>}
              bars={[
                { text: "78,0 kWh/(m²a)", width: "60%", kind: "grey" },
                { text: "109,1 kWh/(m²a)", width: "84%", kind: "blue" },
                { text: "427,9 kWh/(m²a)", width: "100%", kind: "scale" },
              ]}
            />
            <Bars
              label={<>H <small>T</small></>}
              bars={[
                { text: "0,40 W/(m²K)", width: "51%", kind: "grey" },
                { text: "0,70 W/(m²K)", width: "90.5%", kind: "blue" },
                { text: "1,21 W/(m²K)", width: "100%", kind: "scale" },
              ]}
            />
            <Frame label="EH">
              <div className="flex gap-[3px] h-[22px] text-[11px] leading-[22px] font-bold text-white">
                {levels.map((level) => (
                  <span key={level.text} className={`flex justify-end bg-[#b72222] ${level.width}`}>{level.text}</span>
                ))}
              </div>
            </Frame>
          </div>
        </Card>
        <Card title="Erneuerbare Energien" dot="border-black">
          <div className="pb-5">
            <Bars
              label="EE"
              bars={[
                { text: "65 %", width: "65%", kind: "grey" },
                { text: "0 %", width: "100%", kind: "none" },
              ]}
            />
          </div>
        </Card>
        <Card title="Sommerlicher Wärmeschutz" norm="DIN 4108-2" dot="border-black" />
        <Card title="Heizlast" norm="DIN 12831">
          <div className="pb-5">
            <Bars label="Φ" bars={[{ text: "41,5 kW", width: "100%", kind: "none" }]} />
          </div>
        </Card>
        <Card title="Lüftungskonzept" norm="DIN 1946-6" dot="bg-[#7fb416] border-[#5b9a00]">
          <div className="pb-5">
            <Bars
              label="inf min"
              bars={[
                { text: "51 m³/h", width: "50%", kind: "grey" },
                { text: "20 m³/h", width: "19.5%", kind: "blue" },
              ]}
            />
          </div>
        </Card>
        <Card title="Beratung" norm="DIN V 18599">
          <Bars bars={[{ width: "100%", kind: "scale" }]} />
        </Card>
      </div>
      <div className="flex flex-col items-center grow py-1.5 bg-[#fcfcfc]">
        <svg viewBox="0 0 12 10" className="w-3 h-2.5 shrink-0" aria-hidden="true"><path d="M6 0l6 9H0z" fill="#8a8a8a" /></svg>
        <div className="w-[11px] h-[843px] mt-[7px] rounded-full bg-[#8a8a8a]" />
        <svg viewBox="0 0 12 10" className="w-3 h-2.5 mt-auto shrink-0" aria-hidden="true"><path d="M6 10l6-9H0z" fill="#8a8a8a" /></svg>
      </div>
    </div>
  </aside>
);

const menu = ["Datei", "Bearbeiten", "Ansicht", "Ergebnisse", "Grafiken", "Werkzeuge", "Berichte", "Extras", "Hilfe"];

const App = () => {
  return (
    <div className="flex flex-col h-screen overflow-hidden bg-[#f0f0f0] text-black text-[14px] leading-5 font-['Open_Sans','Noto_Sans',sans-serif]">
      <header className="flex items-center h-[34px] shrink-0 pb-0.5 pl-1.5 bg-[#eef3fa]">
        <Logo />
        <span className="grow pl-1">EVEBI - Musterhaus.evex</span>
        <button aria-label="Minimieren" className="flex items-center justify-center w-[58px] h-full">
          <span className="w-3 h-px bg-black" />
        </button>
        <button aria-label="Maximieren" className="flex items-center justify-center w-[58px] h-full">
          <span className="w-3 h-3 border border-black rounded-[2px]" />
        </button>
        <button aria-label="Schließen" className="flex items-center justify-center w-[58px] h-full -mr-0.5">
          <svg viewBox="0 0 12 12" className="w-3 h-3" stroke="#000" strokeWidth="1.200" aria-hidden="true"><path d="M0 0l12 12M12 0L0 12" /></svg>
        </button>
      </header>
      <nav className="flex items-center gap-4 h-[26px] shrink-0 pl-px border-b border-white">
        {menu.map((item) => (
          <button key={item}>{item}</button>
        ))}
      </nav>
      <Toolbar />
      <div className="flex grow min-h-0">
        <Sidebar />
        <Workspace />
        <Results />
      </div>
    </div>
  );
};

export default App;
